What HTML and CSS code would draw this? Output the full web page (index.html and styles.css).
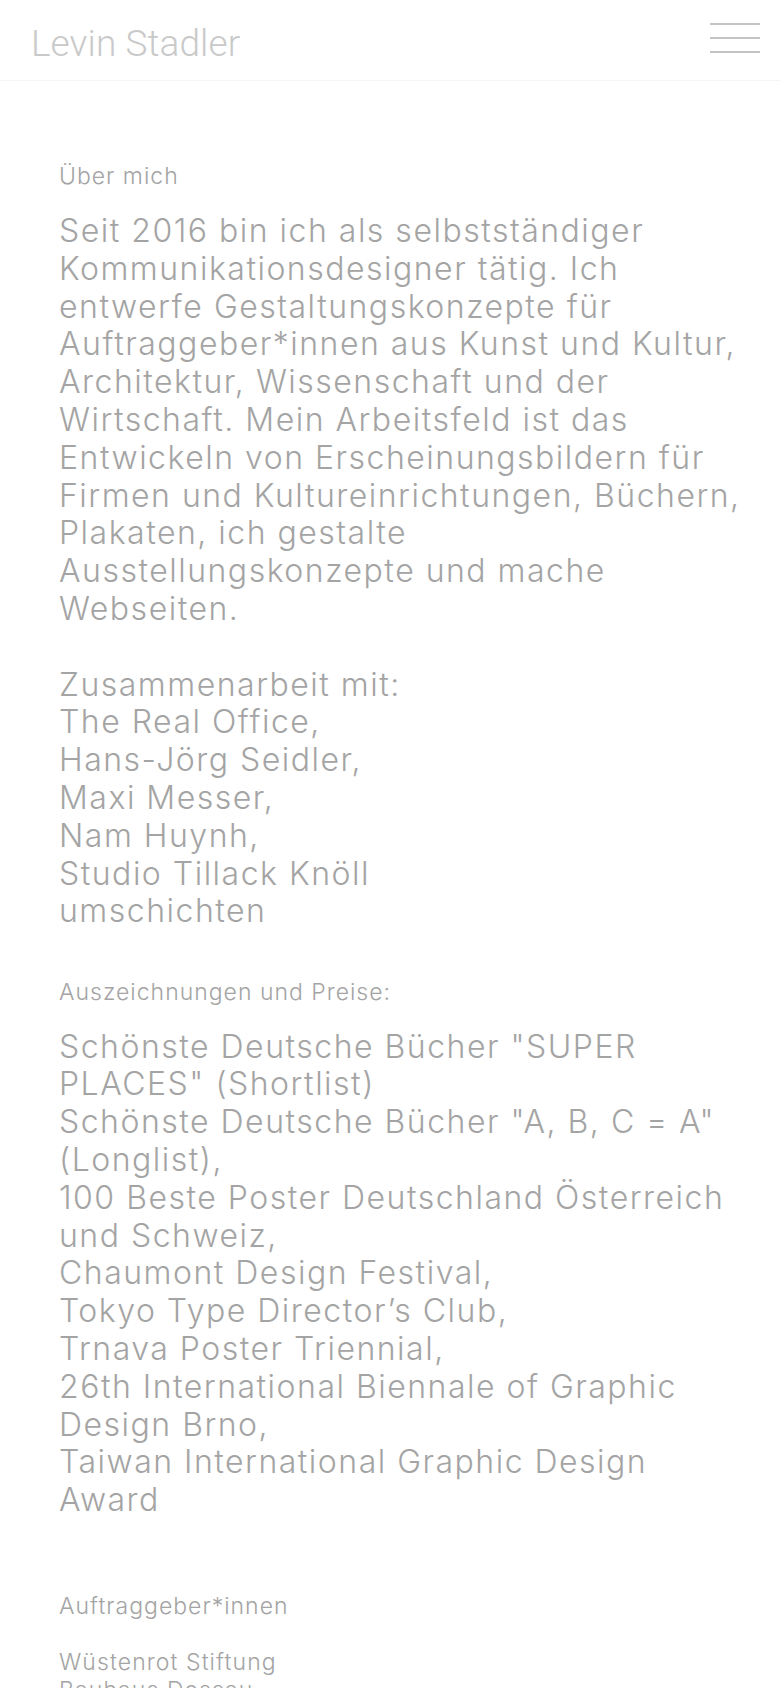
FILE: index.html
```html
<!DOCTYPE html>
<html lang="de">
<head>
<meta charset="utf-8">
<title>Levin Stadler</title>
<link rel="stylesheet" href="styles.css">
</head>
<body>
<header class="site-header">
  <div class="logo">Levin Stadler</div>
  <button class="menu" aria-label="Menü">
    <span></span><span></span><span></span>
  </button>
</header>
<main class="content">
  <section class="block">
    <h2 class="label">Über mich</h2>
    <p class="big">Seit 2016 bin ich als selbstständiger Kommunikationsdesigner tätig. Ich entwerfe Gestaltungskonzepte für Auftraggeber*innen aus Kunst und Kultur, Architektur, Wissenschaft und der Wirtschaft. Mein Arbeitsfeld ist das Entwickeln von Erscheinungsbildern für Firmen und Kultureinrichtungen, Büchern, Plakaten, ich gestalte Ausstellungskonzepte und mache Webseiten.</p>
    <p class="big spaced">Zusammenarbeit mit:<br>The Real Office,<br>Hans-Jörg Seidler,<br>Maxi Messer,<br>Nam Huynh,<br>Studio Tillack Knöll<br>umschichten</p>
  </section>
  <section class="block awards">
    <h2 class="label">Auszeichnungen und Preise:</h2>
    <p class="big">Schönste Deutsche Bücher "SUPER PLACES" (Shortlist)<br>Schönste Deutsche Bücher "A, B, C = A" (Longlist),<br>100 Beste Poster Deutschland Österreich und Schweiz,<br>Chaumont Design Festival,<br>Tokyo Type Director’s Club,<br>Trnava Poster Triennial,<br>26th International Biennale of Graphic Design Brno,<br>Taiwan International Graphic Design Award</p>
  </section>
  <section class="block clients">
    <h2 class="label">Auftraggeber*innen</h2>
    <ul class="small-list">
      <li>Wüstenrot Stiftung</li>
      <li>Bauhaus Dessau</li>
    </ul>
  </section>
</main>
</body>
</html>
```
FILE: styles.css
```css
html, body {
  margin: 0;
  padding: 0;
  background: #ffffff;
}
body {
  font-family: Inter, "Liberation Sans", sans-serif;
  font-weight: 300;
  color: #a4a4a4;
}
.site-header {
  height: 80px;
  border-bottom: 1px solid #f4f4f4;
  display: flex;
  align-items: center;
  justify-content: space-between;
  padding: 0 20px 0 31px;
  box-sizing: content-box;
}
.logo {
  font-family: Roboto, "Liberation Sans", sans-serif;
  font-weight: 300;
  font-size: 37px;
  color: #c9c9c9;
  letter-spacing: 0.1px;
  margin-top: 6px;
}
.menu {
  width: 50px;
  height: 30px;
  padding: 0;
  border: 0;
  background: none;
  display: flex;
  flex-direction: column;
  justify-content: space-between;
  margin-top: -4px;
}
.menu span {
  display: block;
  height: 2px;
  width: 50px;
  background: #c4c4c4;
}
.content {
  padding: 0 36px 0 59px;
}
.block {
  margin: 0;
}
.label {
  margin: 0;
  font-size: 23px;
  font-weight: 300;
  line-height: 26px;
  letter-spacing: 1px;
}
.big {
  margin: 0;
  font-size: 32px;
  line-height: 37.8px;
  letter-spacing: 1.5px;
}
.spaced {
  margin-top: 37.8px;
}
.block:first-child { padding-top: 82px; }
.block:first-child .label + .big,
.awards .label + .big { margin-top: 23px; }
.awards { margin-top: 48.5px; }
.clients { margin-top: 74px; }
.small-list {
  list-style: none;
  margin: 28.5px 0 0;
  padding: 0;
  font-size: 23px;
  line-height: 28px;
  letter-spacing: 1.1px;
}
```
